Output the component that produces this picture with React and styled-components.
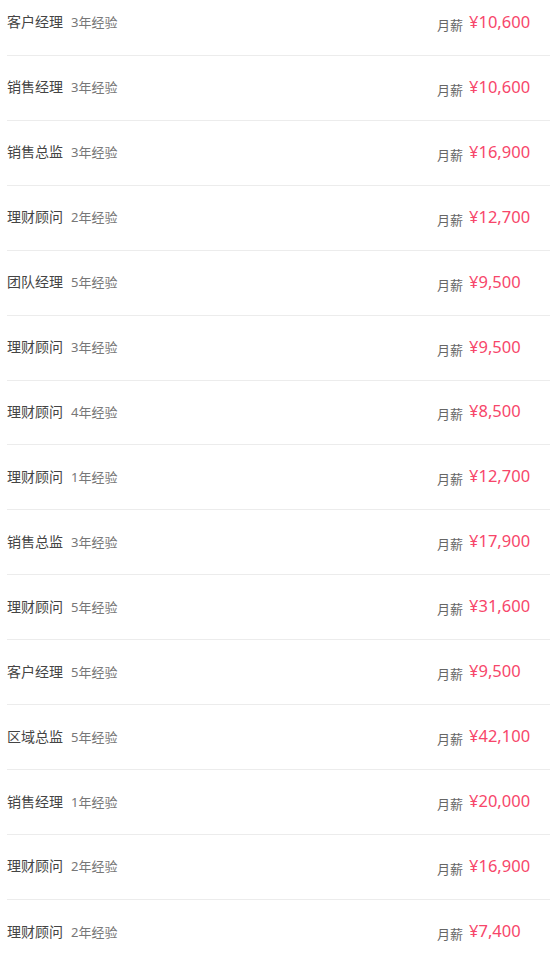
import React from 'react';
import styled, { createGlobalStyle } from 'styled-components';

const GlobalStyle = createGlobalStyle`
  html, body {
    margin: 0;
    padding: 0;
    background: #fff;
    overflow: hidden;
  }
  body {
    font-family: "Noto Sans", "Noto Sans CJK SC", sans-serif;
  }
`;

const jobs = [
  { title: '客户经理', exp: '3年经验', pay: '¥10,600' },
  { title: '销售经理', exp: '3年经验', pay: '¥10,600' },
  { title: '销售总监', exp: '3年经验', pay: '¥16,900' },
  { title: '理财顾问', exp: '2年经验', pay: '¥12,700' },
  { title: '团队经理', exp: '5年经验', pay: '¥9,500' },
  { title: '理财顾问', exp: '3年经验', pay: '¥9,500' },
  { title: '理财顾问', exp: '4年经验', pay: '¥8,500' },
  { title: '理财顾问', exp: '1年经验', pay: '¥12,700' },
  { title: '销售总监', exp: '3年经验', pay: '¥17,900' },
  { title: '理财顾问', exp: '5年经验', pay: '¥31,600' },
  { title: '客户经理', exp: '5年经验', pay: '¥9,500' },
  { title: '区域总监', exp: '5年经验', pay: '¥42,100' },
  { title: '销售经理', exp: '1年经验', pay: '¥20,000' },
  { title: '理财顾问', exp: '2年经验', pay: '¥16,900' },
  { title: '理财顾问', exp: '2年经验', pay: '¥7,400' },
];

const List = styled.ul`
  list-style: none;
  margin: -9px 0 0 7px;
  padding: 0;
`;

const Row = styled.li`
  box-sizing: border-box;
  display: flex;
  align-items: center;
  justify-content: space-between;
  height: 64.93px;
  padding-bottom: 3px;
  border-bottom: 1px solid #ececec;

  &:last-child {
    border-bottom: none;
  }
`;

const Info = styled.div`
  display: flex;
  align-items: baseline;
  gap: 8px;
`;

const Title = styled.span`
  font-size: 14px;
  color: #444;
`;

const Exp = styled.span`
  font-size: 13px;
  color: #777;
`;

const Salary = styled.div`
  display: flex;
  align-items: baseline;
  gap: 6px;
  width: 113px;
`;

const Label = styled.span`
  font-size: 13px;
  color: #666;
  position: relative;
  top: 2px;
`;

const Pay = styled.span`
  font-size: 16.5px;
  color: #f7466a;
`;

export default function App() {
  return (
    <>
      <GlobalStyle />
      <List>
        {jobs.map((job, i) => (
          <Row key={i}>
            <Info>
              <Title>{job.title}</Title>
              <Exp>{job.exp}</Exp>
            </Info>
            <Salary>
              <Label>月薪</Label>
              <Pay>{job.pay}</Pay>
            </Salary>
          </Row>
        ))}
      </List>
    </>
  );
}
